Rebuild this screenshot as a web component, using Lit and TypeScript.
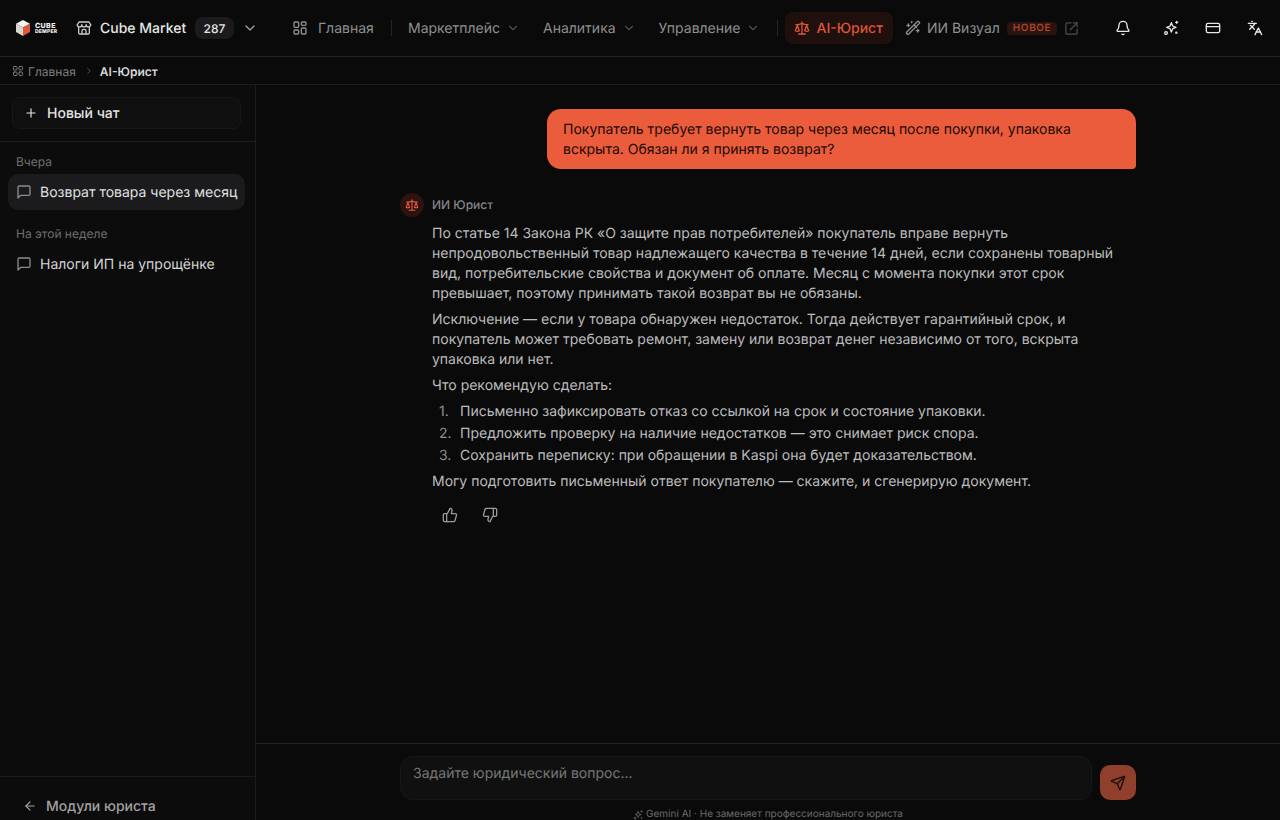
import { LitElement, html, css, svg } from 'lit';
import { customElement } from 'lit/decorators.js';

// shared stroke icon helper, 24 box
const icon = (size: number, body: unknown, cls = '') => html`<svg class="ico ${cls}" width=${size} height=${size} viewBox="0 0 24 24" fill="none" stroke="currentColor" stroke-width="2" stroke-linecap="round" stroke-linejoin="round">${body}</svg>`;

const chevron = svg`<path d="m6 9 6 6 6-6"/>`;
const grid = svg`<rect x="3" y="3" width="7" height="8" rx="1.5"/><rect x="14" y="3" width="7" height="5" rx="1.5"/><rect x="14" y="12" width="7" height="9" rx="1.5"/><rect x="3" y="15" width="7" height="6" rx="1.5"/>`;
const grid4 = svg`<rect x="3" y="3" width="7" height="7" rx="1.5"/><rect x="14" y="3" width="7" height="7" rx="1.5"/><rect x="14" y="14" width="7" height="7" rx="1.5"/><rect x="3" y="14" width="7" height="7" rx="1.5"/>`;
const store = svg`<path d="M2 7l2.5-4h15L22 7"/><path d="M2 7a3.3 3.3 0 0 0 6.7 0 3.3 3.3 0 0 0 6.6 0A3.3 3.3 0 0 0 22 7"/><path d="M4 11v8a2 2 0 0 0 2 2h12a2 2 0 0 0 2-2v-8"/><path d="M9 21v-5a2 2 0 0 1 2-2h2a2 2 0 0 1 2 2v5"/>`;
const scale = svg`<path d="m16 16 3-8 3 8c-.9.7-1.9 1-3 1s-2.100-.3-3-1Z"/><path d="m2 16 3-8 3 8c-.9.7-1.900 1-3 1s-2.100-.3-3-1Z"/><path d="M7 21h10"/><path d="M12 3v18"/><path d="M3 7h2c2 0 5-1 7-2 2 1 5 2 7 2h2"/>`;
const wand = svg`<path d="m21.600 2.400-1.200-1.200a1.200 1.200 0 0 0-1.700 0L2.400 17.500a1.200 1.200 0 0 0 0 1.700l1.200 1.200a1.200 1.200 0 0 0 1.700 0L21.600 4.100a1.200 1.200 0 0 0 0-1.700Z" transform="translate(0 1)"/><path d="m14 8 3 3"/><path d="M5 6v4"/><path d="M19 14v4"/><path d="M10 2v2"/><path d="M7 8H3"/><path d="M21 16h-4"/>`;
const external = svg`<path d="M21 13v6a2 2 0 0 1-2 2H5a2 2 0 0 1-2-2V5a2 2 0 0 1 2-2h6"/><path d="M15 3h6v6"/><path d="M10 14 21 3"/>`;
const bell = svg`<path d="M10.300 21a2 2 0 0 0 3.400 0"/><path d="M3.300 15.300A1 1 0 0 0 4 17h16a1 1 0 0 0 .7-1.700C19.400 14 18 12.500 18 8A6 6 0 0 0 6 8c0 4.500-1.400 6-2.700 7.300"/>`;
const sparkles = svg`<path d="M12.500 4l2 5 5 2-5 2-2 5-2-5-5-2 5-2Z"/><path d="M20.500 2v3"/><path d="M19 3.500h3"/><circle cx="4.500" cy="19.500" r="2"/><circle cx="20" cy="19" r=".8"/>`;
const card = svg`<rect x="2" y="5" width="20" height="14" rx="2.500"/><path d="M2 10h20"/>`;
const lang = svg`<path d="m5 8 6 6"/><path d="m4 14 6-6 2-3"/><path d="M2 5h12"/><path d="M7 2h1"/><path d="m22 22-5-10-5 10"/><path d="M14 18h6"/>`;
const plus = svg`<path d="M5 12h14"/><path d="M12 5v14"/>`;
const chat = svg`<path d="M21 15a2 2 0 0 1-2 2H7l-4 4V5a2 2 0 0 1 2-2h14a2 2 0 0 1 2 2z"/>`;
const arrowLeft = svg`<path d="m12 19-7-7 7-7"/><path d="M19 12H5"/>`;
const thumbUp = svg`<path d="M7 10v12"/><path d="M15 5.900 14 10h5.800a2 2 0 0 1 1.900 2.600l-2.300 8a2 2 0 0 1-1.900 1.400H4a2 2 0 0 1-2-2v-8a2 2 0 0 1 2-2h2.800a2 2 0 0 0 1.800-1.100L12 2a3.100 3.100 0 0 1 3 3.900Z"/>`;
const thumbDown = svg`<path d="M17 14V2"/><path d="M9 18.100 10 14H4.200a2 2 0 0 1-1.900-2.600l2.300-8A2 2 0 0 1 6.500 2H20a2 2 0 0 1 2 2v8a2 2 0 0 1-2 2h-2.800a2 2 0 0 0-1.800 1.100L12 22a3.100 3.100 0 0 1-3-3.900Z"/>`;
const send = svg`<path d="M14.500 21.700a.5.500 0 0 0 .9 0l6.500-19a.5.500 0 0 0-.6-.6l-19 6.500a.5.500 0 0 0 0 .9l7.900 3.200a2 2 0 0 1 1.100 1.100z"/><path d="m21.800 2.200-10.900 10.900"/>`;

@customElement('app-root')
export class AppRoot extends LitElement {
  static styles = css`
    :host {
      display: flex;
      flex-direction: column;
      width: 1280px;
      height: 820px;
      overflow: hidden;
      background: #0a0a0b;
      color: #e4e4e4;
      font-family: Inter, 'Liberation Sans', sans-serif;
      font-size: 14px;
      text-rendering: geometricPrecision;
    }
    .ico { flex: none; display: block; }

    /* top bar */
    .topbar {
      display: flex;
      align-items: center;
      flex: none;
      height: 56px;
      padding-left: 15px;
      border-bottom: 1px solid #242426;
    }
    .logo { display: flex; align-items: center; gap: 4px; width: 61px; flex: none; }
    .logo-text {
      display: flex;
      flex-direction: column;
      width: 22px;
      font-weight: 800;
      color: #f2f2f2;
    }
    .logo-cube { font-size: 7px; line-height: 7px; letter-spacing: 0.4px; }
    .logo-sub { font-size: 5px; line-height: 6px; letter-spacing: 0.2px; }
    .store { display: flex; align-items: center; color: #c8c8c8; flex: none; }
    .store-name { margin-left: 8px; color: #e6e6e6; font-weight: 500; width: 87px; white-space: nowrap; }
    .count {
      width: 39px;
      height: 22px;
      margin-left: 8px;
      border-radius: 8px;
      background: #1b1b1d;
      color: #e4e4e4;
      font-size: 12px;
      font-weight: 500;
      display: flex;
      align-items: center;
      justify-content: center;
    }
    .store-chev { margin-left: 8px; color: #a0a0a0; }
    .nav { display: flex; align-items: center; margin-left: 34px; color: #8f8f8f; white-space: nowrap; }
    .nav-item { display: flex; align-items: center; }
    .nav-home { gap: 10px; width: 99px; flex: none; }
    .nav-sep { width: 1px; height: 16px; background: #242426; flex: none; }
    .nav-menu { gap: 6px; margin-left: 23px; color: #8f8f8f; }
    .nav-menu.first { margin-left: 16px; }
    .nav-menu .ico { color: #4e4e50; }
    .nav-sep.end { margin-left: 17px; }
    .ai-legal {
      display: flex;
      align-items: center;
      gap: 6px;
      height: 32px;
      padding: 0 10px 0 9px;
      margin-left: 7px;
      border-radius: 8px;
      background: #1f100d;
      color: #dc553a;
      font-weight: 500;
    }
    .visual { display: flex; align-items: center; margin-left: 12px; color: #8f8f8f; }
    .visual-name { margin-left: 6px; }
    .tag {
      margin-left: 7px;
      height: 13px;
      padding: 0 6px;
      border-radius: 4px;
      background: #2b1410;
      color: #b9492f;
      font-size: 10px;
      line-height: 13px;
      font-weight: 500;
      letter-spacing: 0.6px;
    }
    .visual-ext { margin-left: 7px; color: #4e4e50; }
    .actions { display: flex; align-items: center; gap: 26px; margin-left: 36px; color: #e8e8e8; }
    .act-star { margin-left: 6px; }

    /* breadcrumbs */
    .crumbs {
      display: flex;
      align-items: center;
      flex: none;
      height: 26px;
      padding: 1px 0 0 12px;
      border-bottom: 1px solid #1d1d1f;
      font-size: 12px;
      color: #7d7d7d;
    }
    .crumbs-home { margin-left: 4px; }
    .crumbs-sep { margin: 0 6px 0 8px; color: #5a5a5a; }
    .crumbs-now { color: #d8d8d8; font-weight: 600; }

    .body { display: flex; flex: 1; min-height: 0; }

    /* sidebar */
    .sidebar {
      display: flex;
      flex-direction: column;
      flex: none;
      width: 255px;
      border-right: 1px solid #1d1d1f;
      background: #0c0c0d;
    }
    .new-wrap { padding: 12px 14px 12px 12px; border-bottom: 1px solid #1d1d1f; }
    .new-chat {
      display: flex;
      align-items: center;
      gap: 9px;
      height: 32px;
      padding-left: 11px;
      border: 1px solid #171719;
      border-radius: 8px;
      background: #0f0f10;
      color: #e4e4e4;
      font-weight: 500;
      box-sizing: border-box;
    }
    .history { flex: 1; padding: 12px 10px 0 8px; }
    .group-label { height: 15px; margin: 0 0 5px 8px; font-size: 12px; line-height: 15px; color: #6f6f6f; }
    .group-label.next { margin-top: 16px; }
    .chat-item {
      display: flex;
      align-items: center;
      gap: 8px;
      height: 36px;
      padding-left: 8px;
      border-radius: 10px;
      color: #d4d4d4;
      white-space: nowrap;
      overflow: hidden;
    }
    .chat-item .ico { color: #8c8c8c; }
    .chat-item.active { background: #1b1b1d; color: #e0e0e0; }
    .modules {
      display: flex;
      align-items: center;
      gap: 9px;
      flex: none;
      height: 28px;
      padding: 15px 0 0 23px;
      border-top: 1px solid #1d1d1f;
      color: #a2a2a2;
      font-weight: 500;
    }

    /* chat */
    .main { display: flex; flex-direction: column; flex: 1; min-width: 0; }
    .thread { flex: 1; padding: 24px 144px 0; }
    .user-row { display: flex; justify-content: flex-end; }
    .user-msg {
      width: 557px;
      padding: 11px 16px 9px;
      border-radius: 14px 14px 4px 14px;
      background: #ea5c3c;
      color: #1a0a06;
      line-height: 20px;
    }
    .ai-head { display: flex; align-items: center; gap: 8px; margin-top: 24px; height: 24px; font-size: 12px; color: #858585; font-weight: 500; }
    .ai-name { margin-bottom: 2px; }
    .avatar {
      display: flex;
      align-items: center;
      justify-content: center;
      width: 24px;
      height: 24px;
      border-radius: 50%;
      background: #2a1310;
      color: #e5573a;
    }
    .ai-body { margin-left: 32px; margin-top: 7px; color: #bcbcbc; line-height: 20px; }
    .ai-body p { margin: 0 0 6px; }
    .ai-body ol { margin: 0 0 6px; padding: 0; list-style: none; }
    .ai-body li { display: flex; height: 20px; margin-bottom: 2px; }
    .ai-body li:last-child { margin-bottom: 0; }
    .num { width: 28px; padding-left: 7px; box-sizing: border-box; color: #8e8e8e; flex: none; }
    .feedback { display: flex; gap: 24px; margin: 15px 0 0 10px; color: #9a9a9a; }

    /* composer */
    .composer { flex: none; height: 77px; border-top: 1px solid #242426; box-sizing: border-box; }
    .composer-row { display: flex; align-items: flex-end; gap: 8px; padding: 12px 144px 0; }
    .input {
      flex: 1;
      height: 44px;
      padding: 8px 12px;
      border: 1px solid #171719;
      border-radius: 12px;
      background: #101011;
      box-sizing: border-box;
      color: #777;
      line-height: 17px;
    }
    .send {
      display: flex;
      align-items: center;
      justify-content: center;
      width: 36px;
      height: 35px;
      border-radius: 10px;
      background: #8f3f2b;
      color: #1d0d09;
    }
    .note {
      display: flex;
      align-items: center;
      justify-content: center;
      gap: 3px;
      margin-top: 8px;
      font-size: 10px;
      line-height: 13px;
      color: #6a6a6a;
    }
  `;

  render() {
    return html`
      <header class="topbar">
        <div class="logo">
          <svg width="16" height="18" viewBox="0 0 16 18">
            <path d="M8 1l7 3.800L8 8.600 1 4.800z" fill="#f4f4f4"/>
            <path d="M1 4.800l7 3.800V17l-7-4z" fill="#d9d6d2"/>
            <path d="M15 4.800 8 8.600V17l7-4z" fill="#e5573a"/>
          </svg>
          <div class="logo-text"><span class="logo-cube">CUBE</span><span class="logo-sub">DEMPER</span></div>
        </div>
        <div class="store">
          ${icon(16, store)}
          <span class="store-name">Cube Market</span>
          <span class="count">287</span>
          <span class="store-chev">${icon(16, chevron)}</span>
        </div>
        <nav class="nav">
          <span class="nav-item nav-home">${icon(16, grid)}Главная</span>
          <span class="nav-sep"></span>
          <span class="nav-item nav-menu first">Маркетплейс${icon(14, chevron)}</span>
          <span class="nav-item nav-menu">Аналитика${icon(14, chevron)}</span>
          <span class="nav-item nav-menu">Управление${icon(14, chevron)}</span>
          <span class="nav-sep end"></span>
          <span class="ai-legal">${icon(16, scale)}AI-Юрист</span>
          <span class="visual">
            ${icon(16, wand)}
            <span class="visual-name">ИИ Визуал</span>
            <span class="tag">НОВОЕ</span>
            <span class="visual-ext">${icon(15, external)}</span>
          </span>
        </nav>
        <div class="actions">
          ${icon(16, bell)}
          <span class="act-star">${icon(16, sparkles)}</span>
          ${icon(16, card)}${icon(16, lang)}
        </div>
      </header>

      <div class="crumbs">
        ${icon(12, grid4)}
        <span class="crumbs-home">Главная</span>
        <span class="crumbs-sep">${icon(10, svg`<path d="m9 18 6-6-6-6"/>`)}</span>
        <span class="crumbs-now">AI-Юрист</span>
      </div>

      <div class="body">
        <aside class="sidebar">
          <div class="new-wrap">
            <div class="new-chat">${icon(14, plus)}Новый чат</div>
          </div>
          <div class="history">
            <div class="group-label">Вчера</div>
            <div class="chat-item active">${icon(16, chat)}Возврат товара через месяц</div>
            <div class="group-label next">На этой неделе</div>
            <div class="chat-item">${icon(16, chat)}Налоги ИП на упрощёнке</div>
          </div>
          <div class="modules">${icon(14, arrowLeft)}Модули юриста</div>
        </aside>

        <main class="main">
          <div class="thread">
            <div class="user-row">
              <div class="user-msg">Покупатель требует вернуть товар через месяц после покупки, упаковка вскрыта. Обязан ли я принять возврат?</div>
            </div>
            <div class="ai-head">
              <span class="avatar">${icon(14, scale)}</span>
              <span class="ai-name">ИИ Юрист</span>
            </div>
            <div class="ai-body">
              <p>По статье 14 Закона РК «О защите прав потребителей» покупатель вправе вернуть<br>непродовольственный товар надлежащего качества в течение 14 дней, если сохранены товарный<br>вид, потребительские свойства и документ об оплате. Месяц с момента покупки этот срок<br>превышает, поэтому принимать такой возврат вы не обязаны.</p>
              <p>Исключение — если у товара обнаружен недостаток. Тогда действует гарантийный срок, и<br>покупатель может требовать ремонт, замену или возврат денег независимо от того, вскрыта<br>упаковка или нет.</p>
              <p>Что рекомендую сделать:</p>
              <ol>
                <li><span class="num">1.</span>Письменно зафиксировать отказ со ссылкой на срок и состояние упаковки.</li>
                <li><span class="num">2.</span>Предложить проверку на наличие недостатков — это снимает риск спора.</li>
                <li><span class="num">3.</span>Сохранить переписку: при обращении в Kaspi она будет доказательством.</li>
              </ol>
              <p>Могу подготовить письменный ответ покупателю — скажите, и сгенерирую документ.</p>
              <div class="feedback">${icon(16, thumbUp)}${icon(16, thumbDown)}</div>
            </div>
          </div>
          <div class="composer">
            <div class="composer-row">
              <div class="input">Задайте юридический вопрос...</div>
              <div class="send">${icon(16, send)}</div>
            </div>
            <div class="note">${icon(10, sparkles)}<span>Gemini AI · Не заменяет профессионального юриста</span></div>
          </div>
        </main>
      </div>
    `;
  }
}
